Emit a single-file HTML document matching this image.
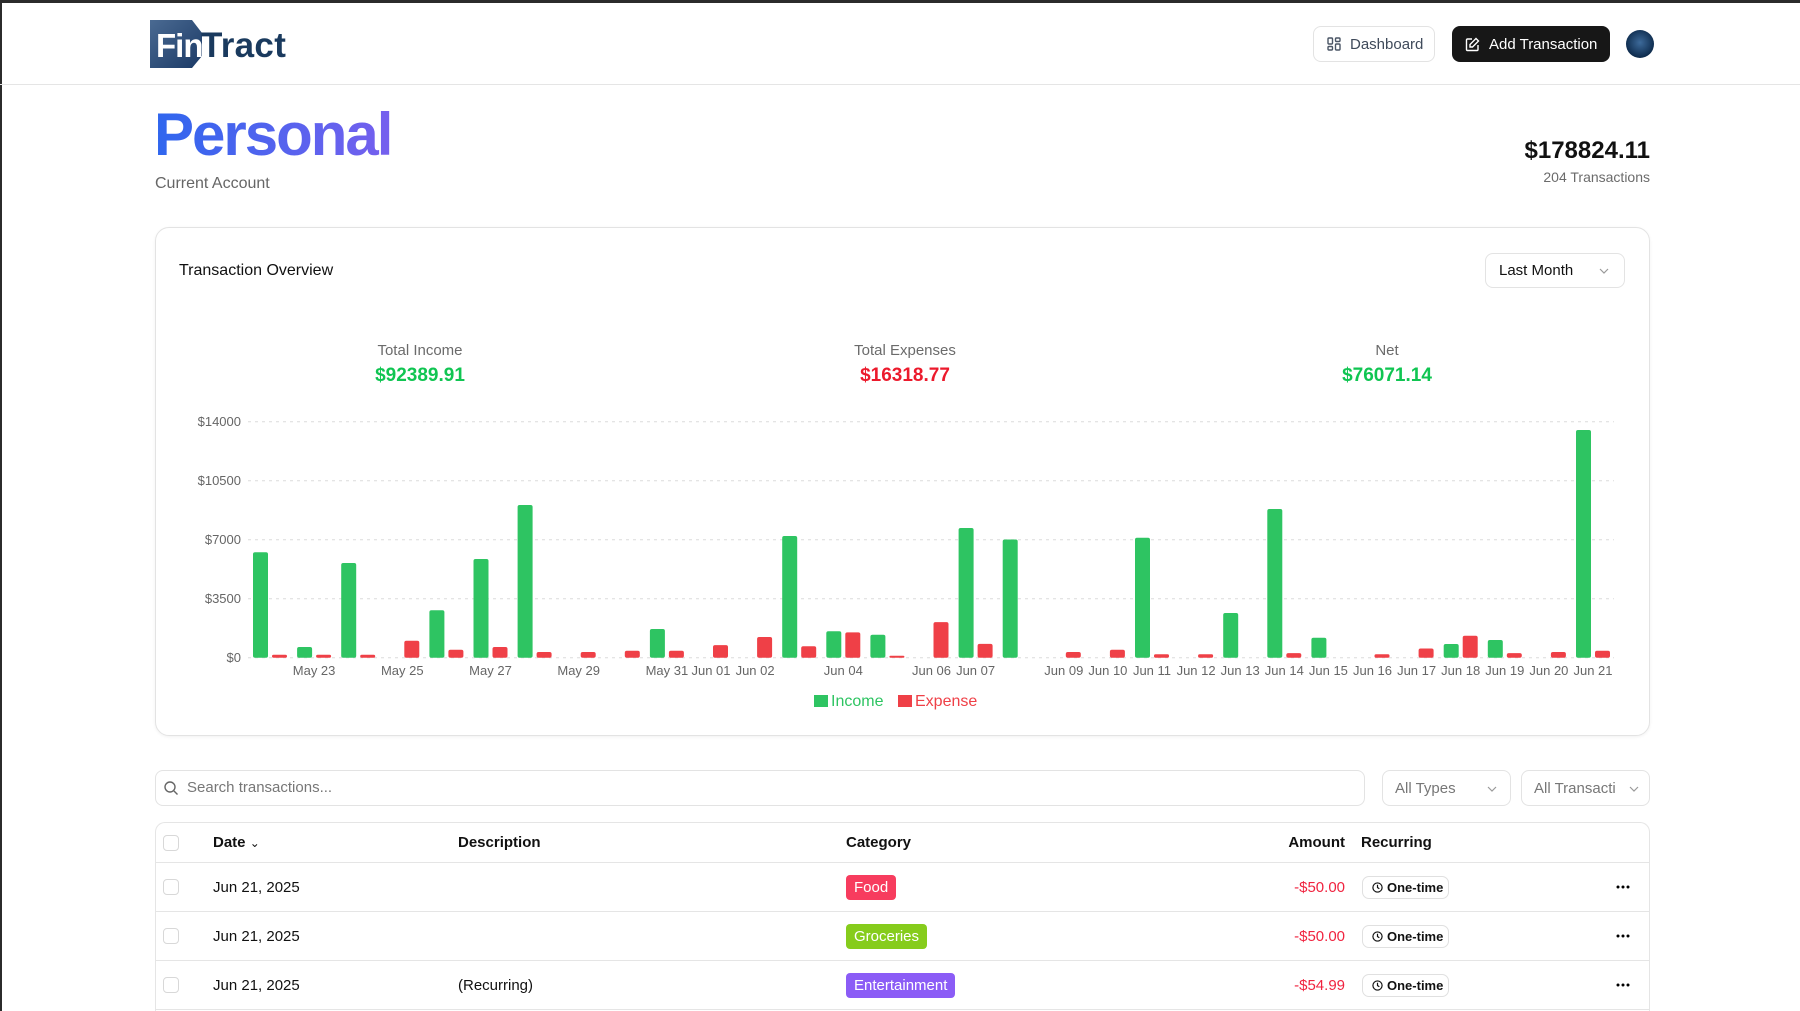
<!DOCTYPE html>
<html><head><meta charset="utf-8">
<style>
*{margin:0;padding:0;box-sizing:border-box}
html,body{width:1800px;height:1011px;overflow:hidden;background:#fff;font-family:"Liberation Sans",sans-serif;color:#111}
body{position:relative}
.a{position:absolute}
.topbar{left:0;top:0;width:1800px;height:3px;background:#2b2b2b}
.leftbar{left:0;top:0;width:2px;height:1011px;background:#2b2b2b}
.hdr{left:0;top:84px;width:1800px;height:1px;background:#e5e5e5}
.btn{border-radius:8px;display:flex;align-items:center;font-size:15px}
.card{left:155px;top:227px;width:1495px;height:509px;border:1px solid #e3e3e3;border-radius:14px;box-shadow:0 1px 3px rgba(0,0,0,.06)}
.sel{border:1px solid #e3e3e3;border-radius:8px;display:flex;align-items:center;font-size:15px}
.stat{text-align:center;width:300px}
.stat .l{font-size:15px;color:#6b6b6b}
.stat .v{font-size:19px;font-weight:bold;margin-top:6px}
.row{left:155px;width:1495px;border-bottom:1px solid #e5e5e5}
.cb{position:absolute;left:8px;width:16px;height:16px;border:1px solid #d8d8d8;border-radius:4px}
.t{position:absolute;font-size:15px}
.badge{position:absolute;left:691px;height:25px;border-radius:4px;color:#fff;font-size:15px;line-height:25px;padding:0 8px}
.pill{position:absolute;left:1207px;width:87px;height:23px;border:1px solid #e0e0e0;border-radius:7px;font-size:13px;font-weight:bold;display:flex;align-items:center;padding-left:9px;gap:4px}
.amt{position:absolute;right:305px;font-size:15px;color:#f0233f}
.dots{position:absolute;left:1461px}
</style></head><body>
<div class="a topbar"></div><div class="a leftbar"></div>

<svg class="a" style="left:150px;top:20px" width="145" height="50">
<defs><linearGradient id="lg" x1="0" y1="0" x2="1" y2="1"><stop offset="0" stop-color="#4a6a92"/><stop offset="1" stop-color="#1b3a66"/></linearGradient></defs>
<polygon points="0,0 42,0 52,13 52,36 42,48 0,48" fill="url(#lg)"/>
<text x="6" y="37" font-family="Liberation Sans" font-weight="bold" font-size="33" fill="#fff" letter-spacing="-1">Fin</text>
<text x="51" y="37" font-family="Liberation Sans" font-weight="bold" font-size="35" fill="#1a3a5e" letter-spacing="0.3">Tract</text>
</svg>

<div class="a btn" style="left:1313px;top:26px;width:122px;height:36px;border:1px solid #e3e3e3;color:#3f4a5a;padding-left:13px;gap:9px">
<svg width="14" height="14" viewBox="0 0 14 14" fill="none" stroke="#4a5565" stroke-width="1.4"><rect x="1" y="1" width="4.5" height="6" rx="1"/><rect x="8.5" y="1" width="4.5" height="3.5" rx="1"/><rect x="8.5" y="7" width="4.5" height="6" rx="1"/><rect x="1" y="9.5" width="4.5" height="3.5" rx="1"/></svg>Dashboard</div>
<div class="a btn" style="left:1452px;top:26px;width:158px;height:36px;background:#171717;color:#fff;padding-left:13px;gap:9px">
<svg width="15" height="15" viewBox="0 0 15 15" fill="none" stroke="#fff" stroke-width="1.4"><path d="M7 2H2.5a1 1 0 0 0-1 1v9.5a1 1 0 0 0 1 1H12a1 1 0 0 0 1-1V8"/><path d="M11 1.5l2.5 2.5L7.5 10H5V7.5z"/></svg>Add Transaction</div>
<div class="a" style="left:1626px;top:30px;width:28px;height:28px;border-radius:50%;background:radial-gradient(circle at 50% 45%,#3d6a9a,#0e2c4e 70%,#081a30)"></div>
<div class="a hdr"></div>

<div class="a" style="left:154px;top:100px;font-size:60px;font-weight:bold;letter-spacing:-2px;background:linear-gradient(90deg,#2f66ee,#7660ee);-webkit-background-clip:text;background-clip:text;color:transparent;line-height:70px">Personal</div>
<div class="a" style="left:155px;top:175px;font-size:16px;color:#666">Current Account</div>
<div class="a" style="right:150px;top:137px;font-size:24px;font-weight:bold;text-align:right">$178824.11</div>
<div class="a" style="right:150px;top:169px;font-size:14px;color:#6b6b6b;text-align:right">204 Transactions</div>

<div class="a card"></div>
<div class="a" style="left:179px;top:262px;font-size:16px;font-weight:500">Transaction Overview</div>
<div class="a sel" style="left:1485px;top:253px;width:140px;height:35px;padding-left:13px;color:#111">Last Month
<svg class="a" style="left:113px;top:14px" width="10" height="7" viewBox="0 0 10 7" fill="none" stroke="#999" stroke-width="1.2"><path d="M1 1l4 4 4-4"/></svg></div>

<div class="a stat" style="left:270px;top:342px"><div class="l">Total Income</div><div class="v" style="color:#10c552">$92389.91</div></div>
<div class="a stat" style="left:755px;top:342px"><div class="l">Total Expenses</div><div class="v" style="color:#ec1a2c">$16318.77</div></div>
<div class="a stat" style="left:1237px;top:342px"><div class="l">Net</div><div class="v" style="color:#10c552">$76071.14</div></div>

<svg class="a" style="left:0;top:0" width="1800" height="720">
<g stroke="#dcdcdc" stroke-width="1" stroke-dasharray="3 4">
<line x1="248" y1="421.7" x2="1614" y2="421.7"/><line x1="248" y1="480.7" x2="1614" y2="480.7"/><line x1="248" y1="539.7" x2="1614" y2="539.7"/><line x1="248" y1="598.7" x2="1614" y2="598.7"/><line x1="248" y1="657.7" x2="1614" y2="657.7"/>
</g>
<g font-family="Liberation Sans" font-size="13" fill="#666" text-anchor="end">
<text x="241" y="426">$14000</text><text x="241" y="485">$10500</text><text x="241" y="544">$7000</text><text x="241" y="603">$3500</text><text x="241" y="662">$0</text>
</g>
<g fill="#2ec462">
<rect x="253" y="552.3" width="15" height="105.4" rx="2"/>
<rect x="297.1" y="647" width="15" height="10.7" rx="2"/>
<rect x="341.2" y="563" width="15" height="94.7" rx="2"/>
<rect x="429.4" y="610.3" width="15" height="47.4" rx="2"/>
<rect x="473.5" y="559" width="15" height="98.7" rx="2"/>
<rect x="517.6" y="505" width="15" height="152.7" rx="2"/>
<rect x="649.9" y="629" width="15" height="28.7" rx="2"/>
<rect x="782.2" y="536" width="15" height="121.7" rx="2"/>
<rect x="826.3" y="631.3" width="15" height="26.4" rx="2"/>
<rect x="870.4" y="634.7" width="15" height="23" rx="2"/>
<rect x="958.6" y="528" width="15" height="129.7" rx="2"/>
<rect x="1002.7" y="539.5" width="15" height="118.2" rx="2"/>
<rect x="1135" y="537.7" width="15" height="120" rx="2"/>
<rect x="1223.2" y="613" width="15" height="44.7" rx="2"/>
<rect x="1267.3" y="509" width="15" height="148.7" rx="2"/>
<rect x="1311.4" y="637.7" width="15" height="20" rx="2"/>
<rect x="1443.7" y="644" width="15" height="13.7" rx="2"/>
<rect x="1487.8" y="640" width="15" height="17.7" rx="2"/>
<rect x="1576" y="430" width="15" height="227.7" rx="2"/>
</g>
<g fill="#ef4047">
<rect x="272" y="654.7" width="15" height="3" rx="1.5"/>
<rect x="316.1" y="654.7" width="15" height="3" rx="1.5"/>
<rect x="360.2" y="654.7" width="15" height="3" rx="1.5"/>
<rect x="404.3" y="640.7" width="15" height="17" rx="2"/>
<rect x="448.4" y="649.7" width="15" height="8" rx="2"/>
<rect x="492.5" y="647" width="15" height="10.7" rx="2"/>
<rect x="536.6" y="652" width="15" height="5.7" rx="2"/>
<rect x="580.7" y="652" width="15" height="5.7" rx="2"/>
<rect x="624.8" y="650.7" width="15" height="7" rx="2"/>
<rect x="668.9" y="650.7" width="15" height="7" rx="2"/>
<rect x="713" y="645.1" width="15" height="12.6" rx="2"/>
<rect x="757.1" y="637" width="15" height="20.7" rx="2"/>
<rect x="801.2" y="646.2" width="15" height="11.5" rx="2"/>
<rect x="845.3" y="632.4" width="15" height="25.3" rx="2"/>
<rect x="889.4" y="655.7" width="15" height="2" rx="1"/>
<rect x="933.5" y="622.1" width="15" height="35.6" rx="2"/>
<rect x="977.6" y="643.9" width="15" height="13.8" rx="2"/>
<rect x="1065.8" y="652" width="15" height="5.7" rx="2"/>
<rect x="1109.9" y="649.7" width="15" height="8" rx="2"/>
<rect x="1154" y="654.3" width="15" height="3.4" rx="1.5"/>
<rect x="1198.1" y="654.3" width="15" height="3.4" rx="1.5"/>
<rect x="1286.3" y="653.1" width="15" height="4.6" rx="2"/>
<rect x="1374.5" y="654.3" width="15" height="3.4" rx="1.5"/>
<rect x="1418.6" y="648.5" width="15" height="9.2" rx="2"/>
<rect x="1462.7" y="635.7" width="15" height="22" rx="2"/>
<rect x="1506.8" y="653.1" width="15" height="4.6" rx="2"/>
<rect x="1550.9" y="652" width="15" height="5.7" rx="2"/>
<rect x="1595" y="650.8" width="15" height="6.9" rx="2"/>
</g>
<g font-family="Liberation Sans" font-size="13" fill="#666" text-anchor="middle">
<text x="314.1" y="675">May 23</text><text x="402.3" y="675">May 25</text><text x="490.5" y="675">May 27</text><text x="578.7" y="675">May 29</text><text x="666.9" y="675">May 31</text>
<text x="711" y="675">Jun 01</text><text x="755.1" y="675">Jun 02</text><text x="843.3" y="675">Jun 04</text><text x="931.5" y="675">Jun 06</text><text x="975.6" y="675">Jun 07</text>
<text x="1063.8" y="675">Jun 09</text><text x="1107.9" y="675">Jun 10</text><text x="1152" y="675">Jun 11</text><text x="1196.1" y="675">Jun 12</text><text x="1240.2" y="675">Jun 13</text>
<text x="1284.3" y="675">Jun 14</text><text x="1328.4" y="675">Jun 15</text><text x="1372.5" y="675">Jun 16</text><text x="1416.6" y="675">Jun 17</text><text x="1460.7" y="675">Jun 18</text>
<text x="1504.8" y="675">Jun 19</text><text x="1548.9" y="675">Jun 20</text><text x="1593" y="675">Jun 21</text>
</g>
<rect x="814" y="695" width="14" height="12" fill="#2ec462"/>
<text x="831" y="706" font-family="Liberation Sans" font-size="16" fill="#2ec462">Income</text>
<rect x="898" y="695" width="14" height="12" fill="#ef4047"/>
<text x="915" y="706" font-family="Liberation Sans" font-size="16" fill="#ef4047">Expense</text>
</svg>

<div class="a" style="left:155px;top:770px;width:1210px;height:36px;border:1px solid #e3e3e3;border-radius:8px"></div>
<svg class="a" style="left:163px;top:780px" width="16" height="16" viewBox="0 0 16 16" fill="none" stroke="#666" stroke-width="1.4"><circle cx="7" cy="7" r="5"/><path d="M11 11l3.5 3.5"/></svg>
<div class="a" style="left:187px;top:779px;font-size:15px;color:#777">Search transactions...</div>
<div class="a sel" style="left:1382px;top:770px;width:129px;height:36px;padding-left:12px;color:#777">All Types
<svg class="a" style="left:104px;top:15px" width="10" height="7" viewBox="0 0 10 7" fill="none" stroke="#999" stroke-width="1.2"><path d="M1 1l4 4 4-4"/></svg></div>
<div class="a sel" style="left:1521px;top:770px;width:129px;height:36px;padding-left:12px;color:#777;overflow:hidden;white-space:nowrap">All Transacti
<svg class="a" style="left:107px;top:15px" width="10" height="7" viewBox="0 0 10 7" fill="none" stroke="#999" stroke-width="1.2"><path d="M1 1l4 4 4-4"/></svg></div>

<div class="a" style="left:155px;top:822px;width:1495px;height:189px;border:1px solid #e5e5e5;border-bottom:none;border-radius:10px 10px 0 0"></div>
<div class="a row" style="top:822px;height:41px">
<div class="cb" style="top:13px"></div>
<div class="t" style="left:58px;top:12px;font-weight:bold">Date <span style="font-weight:normal;font-size:12px">&#8964;</span></div>
<div class="t" style="left:303px;top:12px;font-weight:bold">Description</div>
<div class="t" style="left:691px;top:12px;font-weight:bold">Category</div>
<div class="t" style="right:305px;top:12px;font-weight:bold">Amount</div>
<div class="t" style="left:1206px;top:12px;font-weight:bold">Recurring</div>
</div>

<div class="a row" style="top:863px;height:49px">
<div class="cb" style="top:16px"></div>
<div class="t" style="left:58px;top:16px">Jun 21, 2025</div>
<div class="badge" style="top:12px;background:#f73c5e">Food</div>
<div class="amt" style="top:16px">-$50.00</div>
<div class="pill" style="top:13px"><svg width="11" height="11" viewBox="0 0 12 12" fill="none" stroke="#111" stroke-width="1.3"><circle cx="6" cy="6" r="5"/><path d="M6 3v3l2 1.3"/></svg>One-time</div>
<svg class="dots" style="top:22px" width="14" height="4"><circle cx="2" cy="2" r="1.5"/><circle cx="7" cy="2" r="1.5"/><circle cx="12" cy="2" r="1.5"/></svg>
</div>
<div class="a row" style="top:912px;height:49px">
<div class="cb" style="top:16px"></div>
<div class="t" style="left:58px;top:16px">Jun 21, 2025</div>
<div class="badge" style="top:12px;background:#86cc1c">Groceries</div>
<div class="amt" style="top:16px">-$50.00</div>
<div class="pill" style="top:13px"><svg width="11" height="11" viewBox="0 0 12 12" fill="none" stroke="#111" stroke-width="1.3"><circle cx="6" cy="6" r="5"/><path d="M6 3v3l2 1.3"/></svg>One-time</div>
<svg class="dots" style="top:22px" width="14" height="4"><circle cx="2" cy="2" r="1.5"/><circle cx="7" cy="2" r="1.5"/><circle cx="12" cy="2" r="1.5"/></svg>
</div>
<div class="a row" style="top:961px;height:49px">
<div class="cb" style="top:16px"></div>
<div class="t" style="left:58px;top:16px">Jun 21, 2025</div>
<div class="t" style="left:303px;top:16px">(Recurring)</div>
<div class="badge" style="top:12px;background:#8b5cf6">Entertainment</div>
<div class="amt" style="top:16px">-$54.99</div>
<div class="pill" style="top:13px"><svg width="11" height="11" viewBox="0 0 12 12" fill="none" stroke="#111" stroke-width="1.3"><circle cx="6" cy="6" r="5"/><path d="M6 3v3l2 1.3"/></svg>One-time</div>
<svg class="dots" style="top:22px" width="14" height="4"><circle cx="2" cy="2" r="1.5"/><circle cx="7" cy="2" r="1.5"/><circle cx="12" cy="2" r="1.5"/></svg>
</div>
</body></html>
